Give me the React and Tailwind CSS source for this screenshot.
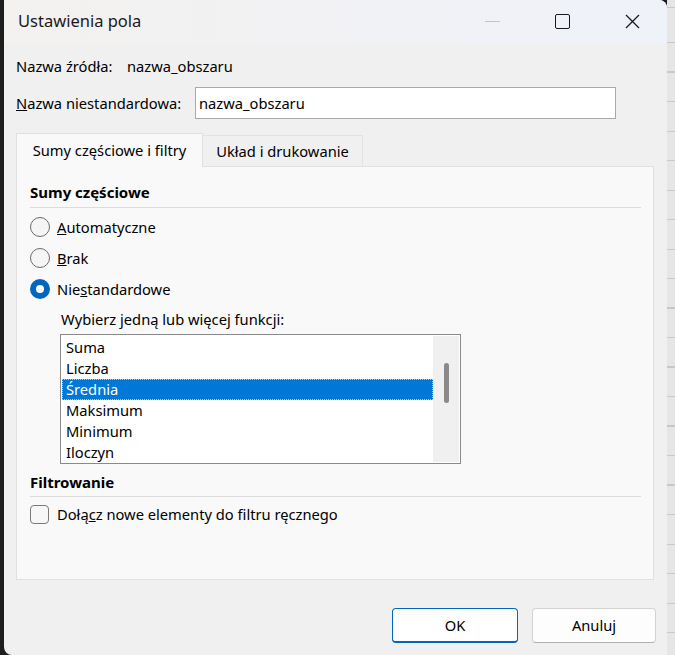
import { useState } from 'react'

// Okno "Ustawienia pola" w stylu Windows 11 – pola nazwy, zakładki, sumy częściowe i filtr.
const FUNCTIONS = ['Suma', 'Liczba', 'Średnia', 'Maksimum', 'Minimum', 'Iloczyn']

function Radio({ checked, children }) {
  return (
    <div className="flex h-[31px] items-center">
      {checked ? (
        <span className="flex h-[20px] w-[20px] items-center justify-center rounded-full bg-[#0067c0]">
          <span className="h-[8px] w-[8px] rounded-full bg-white" />
        </span>
      ) : (
        <span className="h-[20px] w-[20px] rounded-full border border-[#6b6b6b] bg-[#f5f5f5]" />
      )}
      <span className="ml-[7px]">{children}</span>
    </div>
  )
}

function Section({ title }) {
  return (
    <div className="border-b border-[#dcdcdc] pb-[3px] text-[15px] font-bold">{title}</div>
  )
}

export default function App() {
  const [selected, setSelected] = useState(2)

  return (
    <div
      className="flex h-[655px] w-[675px] overflow-hidden bg-[#1e1e1e] text-[14.7px] text-black"
      style={{ fontFamily: '"Noto Sans", "Open Sans", sans-serif' }}
    >
      <div className="w-[4px] shrink-0" />

      <div className="flex w-[663px] shrink-0 flex-col overflow-hidden rounded-tr-[8px] rounded-bl-[8px] bg-[#f0f0f0] shadow-[2px_0_4px_rgba(0,0,0,0.15)]">
        {/* pasek tytułu */}
        <div className="flex h-[43px] shrink-0 items-center bg-gradient-to-r from-[#f4f1ef] to-[#eef2f9] pl-[14px]">
          <span className="text-[16.5px] text-[#1a1a1a]">Ustawienia pola</span>
          <div className="ml-auto flex h-full items-center">
            <div className="flex h-full w-[70px] items-center justify-center">
              <span className="h-px w-[15px] bg-[#c4c4c4]" />
            </div>
            <div className="flex h-full w-[70px] items-center justify-center">
              <span className="h-[15px] w-[15px] rounded-[2px] border-[1.5px] border-[#1a1a1a]" />
            </div>
            <div className="flex h-full w-[70px] items-center justify-center">
              <svg width="15" height="15" viewBox="0 0 15 15" fill="none" stroke="#1a1a1a" strokeWidth="1.3">
                <path d="M1 1l13 13M14 1L1 14" />
              </svg>
            </div>
          </div>
        </div>

        <div className="flex flex-1 flex-col px-[12px]">
          <div className="mt-[12px] flex h-[22px] items-center">
            <span className="w-[111px]">Nazwa źródła:</span>
            <span>nazwa_obszaru</span>
          </div>

          <div className="mt-[10px] flex items-center">
            <span className="w-[179px]">
              <u>N</u>azwa niestandardowa:
            </span>
            <div className="flex h-[32px] w-[421px] items-center border border-[#a9a9a9] bg-white px-[3px]">
              nazwa_obszaru
            </div>
          </div>

          {/* zakładki */}
          <div className="mt-[14px] flex items-end">
            <div className="z-10 -mb-px flex h-[34px] w-[187px] items-center justify-center border border-b-0 border-[#e0e0e0] bg-[#f9f9f9]">
              Sumy częściowe i filtry
            </div>
            <div className="flex h-[31px] w-[160px] items-center justify-center border border-b-0 border-l-0 border-[#e3e3e3] bg-[#f0f0f0]">
              Układ i drukowanie
            </div>
          </div>

          <div className="flex h-[414px] w-[638px] flex-col border border-[#e0e0e0] bg-[#f9f9f9] pl-[13px] pr-[12px] pt-[14px]">
            <Section title="Sumy częściowe" />
            <div className="mt-[4px]">
              <Radio>
                <u>A</u>utomatyczne
              </Radio>
              <Radio>
                <u>B</u>rak
              </Radio>
              <Radio checked>
                Nie<u>s</u>tandardowe
              </Radio>
            </div>

            <div className="ml-[31px] mt-[3px]">Wybierz jedną lub więcej funkcji:</div>

            <div className="ml-[30px] mt-[4px] flex h-[130px] w-[401px] border border-[#8a8a8a] bg-white p-px">
              <div className="flex-1 pt-[1px]">
                {FUNCTIONS.map((f, i) => (
                  <div
                    key={f}
                    onClick={() => setSelected(i)}
                    className={
                      i === selected
                        ? 'flex h-[21px] items-center border border-dotted border-[#f0c080] bg-[#0078d7] px-[3px] text-white'
                        : 'flex h-[21px] items-center px-[4px]'
                    }
                  >
                    {f}
                  </div>
                ))}
              </div>
              <div className="flex w-[26px] justify-center bg-[#f0f0f0] pt-[27px]">
                <span className="h-[40px] w-[5px] rounded-full bg-[#8a8a8a]" />
              </div>
            </div>

            <div className="mt-[7px]">
              <Section title="Filtrowanie" />
            </div>

            <div className="mt-[6px] flex items-center">
              <span className="h-[19px] w-[19px] rounded-[4px] border border-[#7a7a7a] bg-[#f7f7f7]" />
              <span className="ml-[8px]">
                Dołą<u>c</u>z nowe elementy do filtru ręcznego
              </span>
            </div>
          </div>

          <div className="mt-[28px] flex justify-end gap-[14px]">
            <button
              type="button"
              className="h-[35px] w-[126px] rounded-[4px] border border-[#0067c0] border-b-[2px] bg-white"
            >
              OK
            </button>
            <button
              type="button"
              className="mr-[-1px] h-[35px] w-[124px] rounded-[4px] border border-[#d3d3d3] border-b-[#b0b0b0] bg-[#fdfdfd]"
            >
              Anuluj
            </button>
          </div>
        </div>
      </div>

      <div className="flex-1 bg-[#e6e6e6] bg-[repeating-linear-gradient(to_bottom,transparent_0,transparent_28px,#c8c8c8_28px,#c8c8c8_29.5px)] bg-[position:0_14px]" />
    </div>
  )
}
